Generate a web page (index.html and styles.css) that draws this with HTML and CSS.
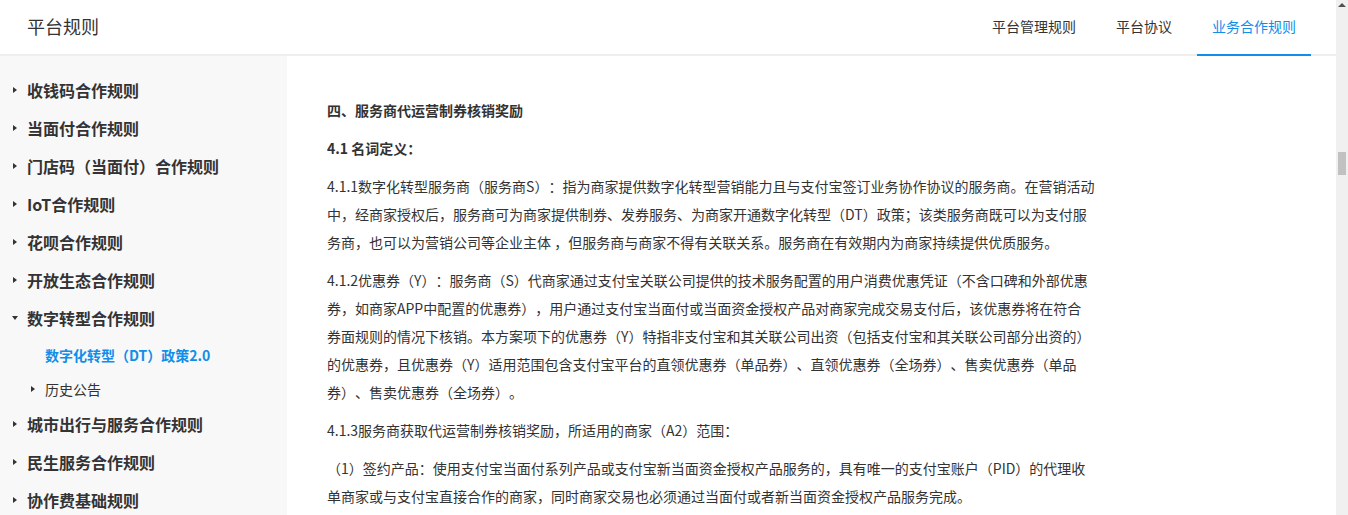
FILE: index.html
```html
<!DOCTYPE html>
<html lang="zh-CN">
<head>
<meta charset="utf-8">
<title>平台规则</title>
<link rel="stylesheet" href="styles.css">
</head>
<body>
<div class="page">
  <div class="main">
    <header class="topbar">
      <div class="brand">平台规则</div>
      <nav class="tabs">
        <a class="tab">平台管理规则</a>
        <a class="tab">平台协议</a>
        <a class="tab active">业务合作规则</a>
      </nav>
    </header>
    <div class="body">
      <aside class="sidebar">
        <div class="nav-item"><span class="caret"><i class="tri-right"></i></span>收钱码合作规则</div>
        <div class="nav-item"><span class="caret"><i class="tri-right"></i></span>当面付合作规则</div>
        <div class="nav-item"><span class="caret"><i class="tri-right"></i></span>门店码（当面付）合作规则</div>
        <div class="nav-item"><span class="caret"><i class="tri-right"></i></span>IoT合作规则</div>
        <div class="nav-item"><span class="caret"><i class="tri-right"></i></span>花呗合作规则</div>
        <div class="nav-item"><span class="caret"><i class="tri-right"></i></span>开放生态合作规则</div>
        <div class="nav-item"><span class="caret"><i class="tri-down"></i></span>数字转型合作规则</div>
        <div class="sub-list">
          <div class="sub-item current">数字化转型（DT）政策2.0</div>
          <div class="sub-item"><span class="sub-caret"><i class="tri-right"></i></span>历史公告</div>
        </div>
        <div class="nav-item"><span class="caret"><i class="tri-right"></i></span>城市出行与服务合作规则</div>
        <div class="nav-item"><span class="caret"><i class="tri-right"></i></span>民生服务合作规则</div>
        <div class="nav-item"><span class="caret"><i class="tri-right"></i></span>协作费基础规则</div>
      </aside>
      <article class="content">
        <p class="strong">四、服务商代运营制券核销奖励</p>
        <p class="strong">4.1 名词定义：</p>
        <p>4.1.1数字化转型服务商（服务商S）：指为商家提供数字化转型营销能力且与支付宝签订业务协作协议的服务商。在营销活动中，经商家授权后，服务商可为商家提供制券、发券服务、为商家开通数字化转型（DT）政策；该类服务商既可以为支付服务商，也可以为营销公司等企业主体 ，但服务商与商家不得有关联关系。服务商在有效期内为商家持续提供优质服务。</p>
        <p>4.1.2优惠券（Y）：服务商（S）代商家通过支付宝关联公司提供的技术服务配置的用户消费优惠凭证（不含口碑和外部优惠券，如商家APP中配置的优惠券），用户通过支付宝当面付或当面资金授权产品对商家完成交易支付后，该优惠券将在符合券面规则的情况下核销。本方案项下的优惠券（Y）特指非支付宝和其关联公司出资（包括支付宝和其关联公司部分出资的）的优惠券，且优惠券（Y）适用范围包含支付宝平台的直领优惠券（单品券）、直领优惠券（全场券）、售卖优惠券（单品券）、售卖优惠券（全场券）。</p>
        <p>4.1.3服务商获取代运营制券核销奖励，所适用的商家（A2）范围：</p>
        <p>（1）签约产品：使用支付宝当面付系列产品或支付宝新当面资金授权产品服务的，具有唯一的支付宝账户（PID）的代理收单商家或与支付宝直接合作的商家，同时商家交易也必须通过当面付或者新当面资金授权产品服务完成。</p>
      </article>
    </div>
  </div>
  <div class="scrollbar">
    <div class="sb-up"><i></i></div>
    <div class="sb-thumb"></div>
  </div>
</div>
</body>
</html>
```

FILE: styles.css
```css
html, body {
  margin: 0;
  padding: 0;
  height: 100%;
  overflow: hidden;
  background: #fff;
}

body {
  font-family: "Noto Sans CJK SC", sans-serif;
  color: #333;
  text-spacing-trim: space-all;
  text-autospace: no-autospace;
}

.page {
  display: flex;
  height: 515px;
}

.main {
  flex: 1;
  display: flex;
  flex-direction: column;
  min-width: 0;
}

/* Header */
.topbar {
  height: 56px;
  flex: 0 0 56px;
  box-sizing: border-box;
  display: flex;
  justify-content: space-between;
  align-items: stretch;
  padding: 0 25px 0 27px;
  box-shadow: inset 0 -2px 0 #eeeeee;
  background: #fff;
}

.brand {
  display: flex;
  align-items: center;
  padding-bottom: 4px;
  font-size: 18px;
  color: #333;
}

.tabs {
  display: flex;
  gap: 10px;
}

.tab {
  display: flex;
  align-items: center;
  padding: 0 15px 2px;
  font-size: 14px;
  color: #333;
  border-bottom: 2px solid transparent;
  cursor: pointer;
}

.tab.active {
  color: #108ee9;
  border-bottom-color: #108ee9;
}

/* Body */
.body {
  flex: 1;
  display: flex;
  min-height: 0;
}

.sidebar {
  width: 287px;
  flex: 0 0 287px;
  background: #f8f8f8;
  padding-top: 15px;
  box-sizing: border-box;
}

.nav-item {
  height: 38px;
  display: flex;
  align-items: center;
  padding-left: 12px;
  font-size: 16px;
  font-weight: bold;
  color: #333;
}

.caret {
  width: 15px;
  flex: 0 0 15px;
  display: flex;
  align-items: center;
}

.tri-right {
  display: block;
  width: 0;
  height: 0;
  margin-left: 1px;
  border-top: 3px solid transparent;
  border-bottom: 3px solid transparent;
  border-left: 4px solid #333;
}

.tri-down {
  display: block;
  width: 0;
  height: 0;
  border-left: 3px solid transparent;
  border-right: 3px solid transparent;
  border-top: 4px solid #333;
}

.sub-list {
  padding-top: 1px;
  margin-bottom: -1px;
}

.sub-item {
  height: 34px;
  display: flex;
  align-items: center;
  padding-left: 45px;
  font-size: 14px;
  color: #333;
  position: relative;
}

.sub-item.current {
  color: #108ee9;
  font-weight: bold;
}

.sub-caret {
  position: absolute;
  left: 30px;
  top: 0;
  bottom: 0;
  display: flex;
  align-items: center;
}

/* Content */
.content {
  flex: 1;
  padding: 40px 0 0 40px;
  font-size: 14px;
  line-height: 28px;
  color: #333;
}

.content p {
  margin: 0 0 10px;
  max-width: 768px;
}

.content p.strong {
  font-weight: bold;
}

.content p.strong + p:not(.strong) {
  margin-top: 1px;
}

/* Fake scrollbar */
.scrollbar {
  width: 12px;
  flex: 0 0 12px;
  background: #f0f0f0;
  display: flex;
  flex-direction: column;
  align-items: center;
}

.sb-up {
  height: 10px;
  display: flex;
  align-items: center;
  justify-content: center;
}

.sb-up i {
  display: block;
  width: 0;
  height: 0;
  border-left: 4px solid transparent;
  border-right: 4px solid transparent;
  border-bottom: 4px solid #505050;
}

.sb-thumb {
  margin-top: 142px;
  width: 8px;
  height: 23px;
  background: #c1c1c1;
}
```
